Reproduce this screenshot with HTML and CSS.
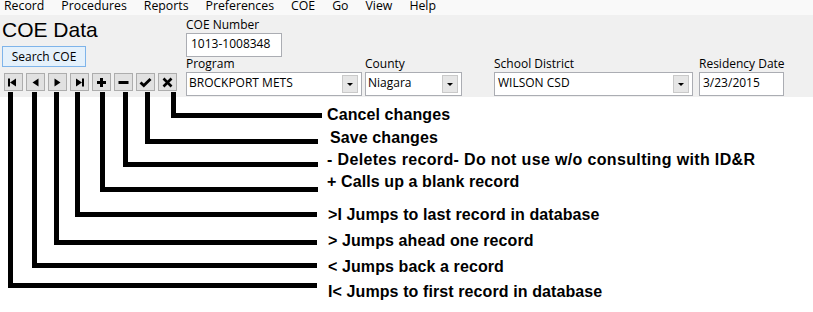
FILE: index.html
```html
<!DOCTYPE html>
<html lang="en">
<head>
    <meta charset="UTF-8">
    <meta name="viewport" content="width=device-width, initial-scale=1.0">
    <title>COE Data</title>
    <link rel="stylesheet" href="styles.css">
</head>
<body>
    <div class="menubar">
        <span>Record</span>
        <span>Procedures</span>
        <span>Reports</span>
        <span>Preferences</span>
        <span>COE</span>
        <span>Go</span>
        <span>View</span>
        <span>Help</span>
    </div>

    <div class="panel">
        <div class="left-col">
            <div class="title">COE Data</div>
            <button class="search-btn">Search COE</button>
            <div class="nav">
                <button class="nav-btn" title="First">
                    <svg width="17" height="16" viewBox="0 0 17 16"><rect x="3" y="4.5" width="2" height="8"/><polygon points="5,8.5 11,4.5 11,12.5"/></svg>
                </button>
                <button class="nav-btn" title="Previous">
                    <svg width="17" height="16" viewBox="0 0 17 16"><polygon points="5.5,8.5 11.5,4.5 11.5,12.5"/></svg>
                </button>
                <button class="nav-btn" title="Next">
                    <svg width="17" height="16" viewBox="0 0 17 16"><polygon points="5.5,4.5 11.5,8.5 5.5,12.5"/></svg>
                </button>
                <button class="nav-btn" title="Last">
                    <svg width="17" height="16" viewBox="0 0 17 16"><polygon points="5,4.5 11,8.5 5,12.5"/><rect x="11" y="4.5" width="2" height="8"/></svg>
                </button>
                <button class="nav-btn" title="New">
                    <svg width="17" height="16" viewBox="0 0 17 16"><rect x="4" y="7" width="9" height="3"/><rect x="7" y="4" width="3" height="9"/></svg>
                </button>
                <button class="nav-btn" title="Delete">
                    <svg width="17" height="16" viewBox="0 0 17 16"><rect x="3.5" y="7" width="10" height="3"/></svg>
                </button>
                <button class="nav-btn" title="Save">
                    <svg width="17" height="16" viewBox="0 0 17 16"><polyline points="3.5,8.5 6.8,11.6 13.5,5" fill="none" stroke="#000" stroke-width="2.8"/></svg>
                </button>
                <button class="nav-btn" title="Cancel">
                    <svg width="17" height="16" viewBox="0 0 17 16"><path d="M4.5 4.5 L12.5 12.5 M12.5 4.5 L4.5 12.5" stroke="#000" stroke-width="2.6"/></svg>
                </button>
            </div>
        </div>

        <div class="fields">
            <div class="field-row">
                <div class="field">
                    <label>COE Number</label>
                    <div class="textbox coe-number">1013-1008348</div>
                </div>
            </div>
            <div class="field-row">
                <div class="field">
                    <label>Program</label>
                    <div class="combo program"><span>BROCKPORT METS</span><i class="drop"></i></div>
                </div>
                <div class="field">
                    <label>County</label>
                    <div class="combo county"><span>Niagara</span><i class="drop"></i></div>
                </div>
                <div class="field school">
                    <label>School District</label>
                    <div class="combo district"><span>WILSON CSD</span><i class="drop"></i></div>
                </div>
                <div class="field residency">
                    <label>Residency Date</label>
                    <div class="textbox date">3/23/2015</div>
                </div>
            </div>
        </div>
    </div>

    <!-- annotation layer: leader lines from each button to its note -->
    <div class="callouts">
        <svg class="leaders" width="813" height="312" viewBox="0 0 813 312">
            <g fill="none" stroke="#000" stroke-width="5">
                <path d="M10.5 92 V285.5 H317"/>
                <path d="M34.5 92 V265.5 H317"/>
                <path d="M56.5 92 V242.5 H317"/>
                <path d="M77.5 92 V214.5 H317"/>
                <path d="M102.5 92 V189.5 H318"/>
                <path d="M125.5 92 V164.5 H318"/>
                <path d="M147.5 92 V141.5 H318"/>
                <path d="M173.5 92 V115.5 H322"/>
            </g>
        </svg>
        <div class="note n-cancel">Cancel changes</div>
        <div class="note n-save">Save changes</div>
        <div class="note n-delete">- Deletes record- Do not use w/o consulting with ID&amp;R</div>
        <div class="note n-new">+ Calls up a blank record</div>
        <div class="note n-last">&gt;I Jumps to last record in database</div>
        <div class="note n-next">&gt; Jumps ahead one record</div>
        <div class="note n-prev">&lt; Jumps back a record</div>
        <div class="note n-first">I&lt; Jumps to first record in database</div>
    </div>
</body>
</html>
```

FILE: styles.css
```css
body {
    margin: 0;
    width: 813px;
    height: 312px;
    background-color: #fff;
    font-family: 'Open Sans', 'Liberation Sans', sans-serif;
    color: #000;
    position: relative;
    overflow: hidden;
}

.menubar {
    display: flex;
    gap: 17px;
    height: 15px;
    padding-left: 4px;
    background-color: #f9f9f9;
    font-size: 12.3px;
    line-height: 11px;
}
.menubar span {
    height: 11px;
}

.panel {
    display: flex;
    height: 82px;
    background-color: #f0f0f0;
}

.left-col {
    width: 184px;
    padding-left: 2px;
    display: flex;
    flex-direction: column;
    align-items: flex-start;
}
.title {
    font-family: 'Liberation Sans', Arial, sans-serif;
    font-size: 21px;
    line-height: 24px;
    margin-top: 3px;
}
.search-btn {
    margin-top: 4px;
    width: 84px;
    height: 21px;
    padding: 0;
    border: 1px solid #7eb4ea;
    background-color: #e5f1fb;
    font-family: 'Open Sans', sans-serif;
    font-size: 12px;
    line-height: 18px;
    color: #000;
}
.nav {
    display: flex;
    gap: 3px;
    margin-top: 6px;
    margin-left: 2px;
}
.nav-btn {
    width: 19px;
    height: 18px;
    padding: 0;
    border: 1px solid #adadad;
    background-color: #e1e1e1;
    display: flex;
    align-items: center;
    justify-content: center;
}
.nav-btn svg {
    display: block;
    fill: #000;
}

.fields {
    padding-top: 3px;
    font-size: 12px;
}
.field-row {
    display: flex;
    gap: 3px;
}
.field label {
    display: block;
    line-height: 14px;
    height: 14px;
    margin-bottom: 1px;
}
.field.school {
    margin-left: 29px;
}
.field.residency {
    margin-left: 3px;
}

.textbox,
.combo {
    box-sizing: border-box;
    height: 24px;
    border: 1px solid #abadb3;
    background-color: #fff;
    line-height: 20px;
    padding-bottom: 2px;
    white-space: nowrap;
}
.textbox {
    padding-left: 4px;
}
.coe-number {
    width: 96px;
}
.date {
    width: 85px;
    padding-left: 3px;
}

.combo {
    display: flex;
    align-items: flex-start;
    padding-left: 2px;
}
.combo span {
    flex: 1;
}
.combo.program {
    width: 176px;
}
.combo.county {
    width: 97px;
}
.combo.district {
    width: 199px;
    padding-left: 3px;
}
.drop {
    position: relative;
    width: 14px;
    height: 16px;
    margin: 2px 3px 0 0;
    border: 1px solid #c9c9c9;
    background-color: #e6e6e6;
}
.drop::after {
    content: '';
    position: absolute;
    left: 4px;
    top: 7px;
    border-left: 3px solid transparent;
    border-right: 3px solid transparent;
    border-top: 3px solid #000;
}

.callouts {
    position: absolute;
    left: 0;
    top: 0;
    width: 813px;
    height: 312px;
    pointer-events: none;
}
.leaders {
    position: absolute;
    left: 0;
    top: 0;
}
.note {
    position: absolute;
    font-family: 'Liberation Sans', Arial, sans-serif;
    font-weight: bold;
    font-size: 16px;
    line-height: 16px;
    white-space: nowrap;
    letter-spacing: 0.1px;
}
.n-cancel { left: 327px; top: 107px; }
.n-save   { left: 330px; top: 130px; }
.n-delete { left: 327px; top: 152px; letter-spacing: 0.35px; }
.n-new    { left: 327px; top: 174px; }
.n-last   { left: 328px; top: 207px; }
.n-next   { left: 328px; top: 233px; }
.n-prev   { left: 328px; top: 259px; }
.n-first  { left: 328px; top: 284px; }
```
